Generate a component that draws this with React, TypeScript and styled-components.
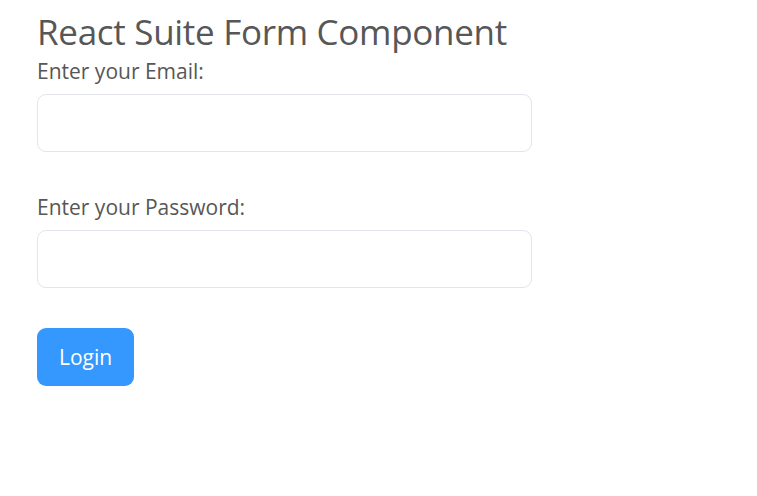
import React from 'react';
import styled, {createGlobalStyle} from "styled-components";

const GlobalStyle = createGlobalStyle`
    body {
        margin: 0;
        background: #fff;
        font-family: "Open Sans", "Noto Sans", sans-serif;
        color: #575757;
    }
`;

const Page = styled.div`
    padding: 0 37px;
`;

const Title = styled.h3`
    margin: 0;
    padding-top: 8px;
    font-size: 35px;
    font-weight: 400;
    line-height: 48px;
    letter-spacing: -0.3px;
`;

const LoginForm = styled.form`
    display: flex;
    flex-direction: column;
    width: 495px;
`;

const Field = styled.div`
    display: flex;
    flex-direction: column;
    margin-bottom: 40px;
`;

const Label = styled.label`
    font-size: 21px;
    line-height: 30px;
    margin-bottom: 8px;
`;

const Input = styled.input`
    box-sizing: border-box;
    height: 58px;
    width: 100%;
    border: 1px solid #e3e5ec;
    border-radius: 9px;
    padding: 0 16px;
    font: inherit;
    font-size: 20px;
    color: #575757;
    outline: none;
`;

const Button = styled.button`
    align-self: flex-start;
    height: 58px;
    padding: 0 22px;
    border: none;
    border-radius: 9px;
    background: #3498ff;
    color: #fff;
    font-family: inherit;
    font-size: 21px;
    cursor: pointer;
`;

const App = () => {
    return (
        <>
            <GlobalStyle/>
            <Page>
                <Title>React Suite Form Component</Title>
                <LoginForm onSubmit={e => e.preventDefault()}>
                    <Field>
                        <Label>Enter your Email:</Label>
                        <Input type="email"/>
                    </Field>
                    <Field>
                        <Label>Enter your Password:</Label>
                        <Input type="password"/>
                    </Field>
                    <Button type="submit">Login</Button>
                </LoginForm>
            </Page>
        </>
    )
};

export default App;
